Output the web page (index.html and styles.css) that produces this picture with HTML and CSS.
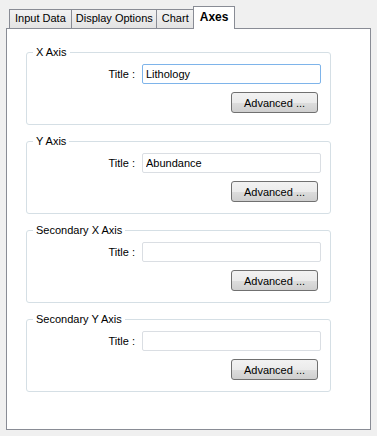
FILE: index.html
```html
<!DOCTYPE html>
<html lang="en">
<head>
  <meta charset="UTF-8" />
  <title>Chart Properties - Axes</title>
  <link rel="stylesheet" href="styles.css">
</head>
<body>

  <div class="dialog">
    <!-- Tab strip -->
    <div class="tabs">
      <div class="tab">Input Data</div>
      <div class="tab">Display Options</div>
      <div class="tab">Chart</div>
      <div class="tab active">Axes</div>
    </div>

    <div class="panel">
      <!-- X Axis -->
      <fieldset class="group">
        <legend>X Axis</legend>
        <div class="row">
          <label class="row-label">Title :</label>
          <input class="field focused" type="text" value="Lithology">
        </div>
        <div class="actions"><button class="btn">Advanced ...</button></div>
      </fieldset>

      <!-- Y Axis -->
      <fieldset class="group">
        <legend>Y Axis</legend>
        <div class="row">
          <label class="row-label">Title :</label>
          <input class="field" type="text" value="Abundance">
        </div>
        <div class="actions"><button class="btn">Advanced ...</button></div>
      </fieldset>

      <!-- Secondary X Axis -->
      <fieldset class="group">
        <legend>Secondary X Axis</legend>
        <div class="row">
          <label class="row-label">Title :</label>
          <input class="field" type="text" value="">
        </div>
        <div class="actions"><button class="btn">Advanced ...</button></div>
      </fieldset>

      <!-- Secondary Y Axis -->
      <fieldset class="group">
        <legend>Secondary Y Axis</legend>
        <div class="row">
          <label class="row-label">Title :</label>
          <input class="field" type="text" value="">
        </div>
        <div class="actions"><button class="btn">Advanced ...</button></div>
      </fieldset>
    </div>
  </div>

</body>
</html>
```

FILE: styles.css
```css
:root {
  --bg: #f0f0f0;
  --tab-border: #898c95;
  --group-border: #d5dfe5;
  --field-border: #dadee3;
  --field-focus: #7eb4ea;
  --text: #000;
}

* {
  box-sizing: border-box;
}

body {
  margin: 0;
  background-color: var(--bg);
  font-family: 'Liberation Sans', Arial, sans-serif;
  font-size: 11px;
  color: var(--text);
}

.dialog {
  padding: 6px;
}

/* Tab strip */
.tabs {
  display: flex;
  align-items: flex-end;
  height: 22px;
  padding-left: 3px;
  position: relative;
  z-index: 1;
}

.tab {
  height: 19px;
  line-height: 17px;
  padding: 0 5px;
  border: 1px solid var(--tab-border);
  border-bottom: none;
  background: linear-gradient(#f2f2f2, #e3e3e3);
}

.tab + .tab {
  margin-left: -1px;
}

.tab:nth-child(2) {
  padding: 0 3px 0 4px;
}

.tab.active {
  height: 23px;
  line-height: 20px;
  margin-bottom: -1px;
  margin-left: -2px;
  padding: 0 6px;
  background: #fff;
  font-weight: bold;
  font-size: 12px;
}

/* Content panel */
.panel {
  height: 402px;
  border: 1px solid var(--tab-border);
  background: #fff;
  padding: 16px 39px 0 19px;
}

.group {
  margin: 0 0 9px 0;
  height: 80px;
  border: 1px solid var(--group-border);
  border-radius: 3px;
  padding: 5px 9px 0 0;
}

.group legend {
  margin-left: 6px;
  padding: 0 3px;
  line-height: 14px;
}

.row {
  display: flex;
  align-items: center;
  gap: 7px;
}

.row-label {
  width: 108px;
  text-align: right;
}

.field {
  flex: 1;
  height: 20px;
  border: 1px solid var(--field-border);
  border-radius: 2px;
  padding: 0 3px;
  font: inherit;
  color: var(--text);
}

.field.focused {
  border-color: var(--field-focus);
}

.actions {
  display: flex;
  justify-content: flex-end;
  margin-top: 8px;
  padding-right: 3px;
}

.btn {
  width: 87px;
  height: 21px;
  border: 1px solid #707070;
  border-radius: 3px;
  background: linear-gradient(#f2f2f2 0%, #ebebeb 50%, #dddddd 51%, #cfcfcf 100%);
  font: inherit;
  color: var(--text);
  padding: 0;
}
```
